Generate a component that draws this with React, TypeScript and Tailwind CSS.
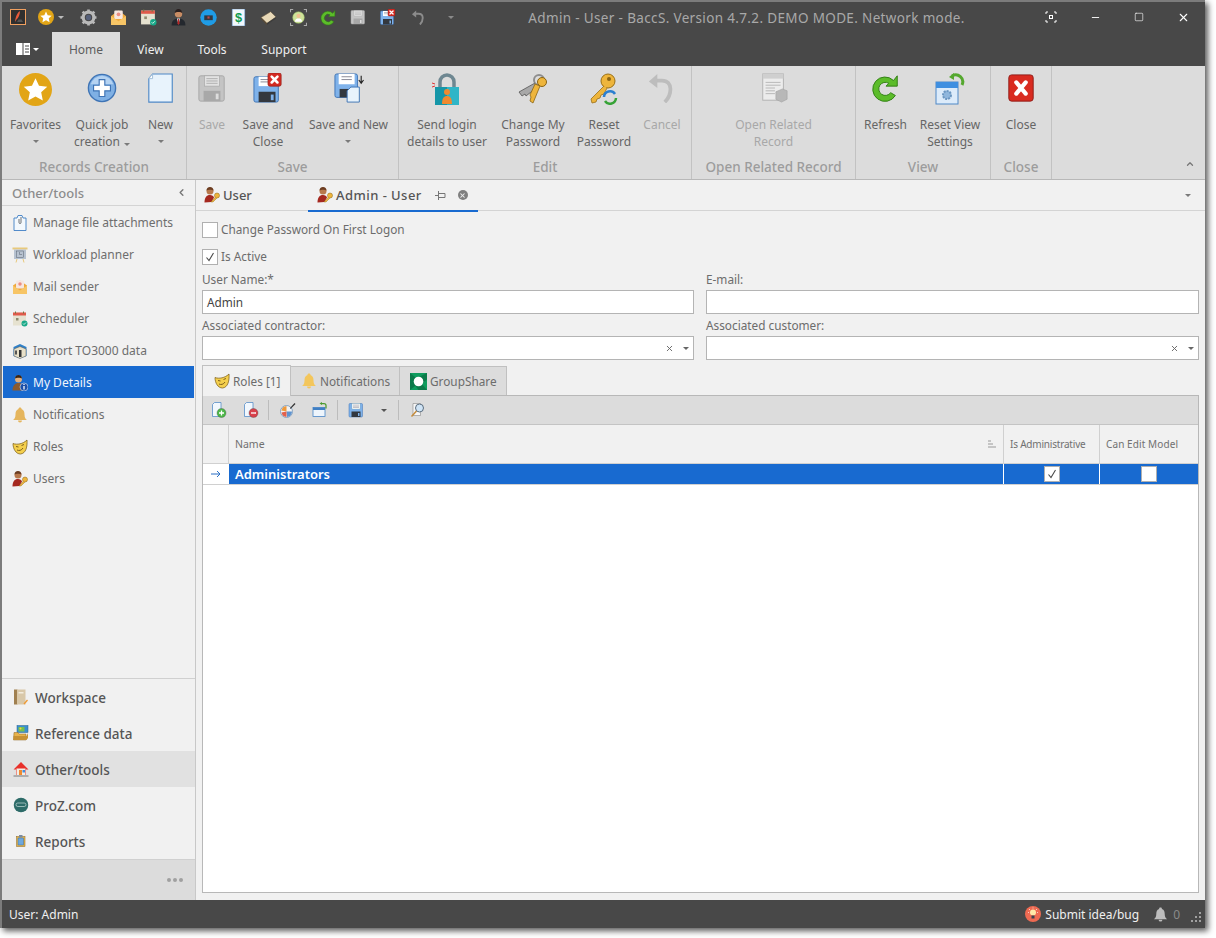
import { ReactNode } from "react";
import { ChevronLeft, ChevronUp, X, Minus, Square } from "lucide-react";

type IconProps = { s?: number };

const Svg = ({ s = 16, children }: { s?: number; children: ReactNode }) => (
  <svg width={s} height={s} viewBox="0 0 32 32" className="shrink-0">
    {children}
  </svg>
);

const StarIcon = ({ s }: IconProps) => (
  <Svg s={s}>
    <circle cx="16" cy="16" r="16" fill="#e2a516" />
    <path d="M16 5l3.4 7.4 8 .9-5.9 5.4 1.6 8L16 22.7l-7.1 4 1.6-8-5.9-5.4 8-.9z" fill="#fff" />
  </Svg>
);

const PlusIcon = ({ s }: IconProps) => (
  <Svg s={s}>
    <circle cx="16" cy="16" r="14.5" fill="#7fb0e4" stroke="#3f74b5" strokeWidth="1.5" />
    <path d="M16 3a13 13 0 0 1 12 9H4a13 13 0 0 1 12-9z" fill="#b5d3f2" />
    <path d="M13 7h6v6h6v6h-6v6h-6v-6H7v-6h6z" fill="#fff" stroke="#3f74b5" strokeWidth="1.2" />
  </Svg>
);

const PageIcon = ({ s }: IconProps) => (
  <Svg s={s}>
    <path d="M7 1h21v30H3V6z" fill="#e8f3fc" stroke="#4f88c6" strokeWidth="1.2" />
    <path d="M7 1v5H3z" fill="#fff" stroke="#9fbcd8" />
  </Svg>
);

const Floppy = ({ s, grey }: IconProps & { grey?: boolean }) => (
  <Svg s={s}>
    <rect x="2" y="3" width="27" height="27" rx="2" fill={grey ? "#c4c4c4" : "#7fb2ea"} stroke={grey ? "#a6a6a6" : "#3e73b4"} />
    <rect x="8" y="3" width="16" height="11" fill={grey ? "#e2e2e2" : "#fff"} stroke={grey ? "#a6a6a6" : "#8aa"} strokeWidth=".7" />
    <path d="M10 6h12M10 8.5h12M10 11h12" stroke={grey ? "#a0a0a0" : "#667"} strokeWidth=".8" />
    <rect x="7" y="19" width="18" height="11" fill={grey ? "#a8a8a8" : "#33383f"} />
    <rect x="20" y="22" width="3" height="6" fill={grey ? "#ddd" : "#7fb2ea"} />
  </Svg>
);

const RedBox = ({ x, y, w }: { x: number; y: number; w: number }) => (
  <g>
    <rect x={x} y={y} width={w} height={w} rx={w / 7} fill="#d42a22" stroke="#96201a" strokeWidth=".8" />
    <path
      d={`M${x + w * 0.28} ${y + w * 0.28}L${x + w * 0.72} ${y + w * 0.72}M${x + w * 0.72} ${y + w * 0.28}L${x + w * 0.28} ${y + w * 0.72}`}
      stroke="#fff"
      strokeWidth={w * 0.2}
      strokeLinecap="round"
    />
  </g>
);

const FloppyX = ({ s }: IconProps) => (
  <Svg s={s}>
    <rect x="1" y="4" width="26" height="27" rx="2" fill="#7fb2ea" stroke="#3e73b4" />
    <rect x="6" y="4" width="15" height="10" fill="#fff" />
    <path d="M8 7h11M8 9.5h11" stroke="#667" strokeWidth=".8" />
    <rect x="6" y="20" width="18" height="11" fill="#33383f" />
    <rect x="19" y="23" width="3" height="6" fill="#7fb2ea" />
    <RedBox x={16} y={0} w={14} />
  </Svg>
);

const FloppyNew = ({ s }: IconProps) => (
  <Svg s={s}>
    <rect x="1" y="1" width="24" height="25" rx="2" fill="#7fb2ea" stroke="#3e73b4" />
    <rect x="5" y="1" width="17" height="11" fill="#fff" />
    <path d="M8 4h11M8 7h11" stroke="#667" strokeWidth=".8" />
    <rect x="6" y="17" width="14" height="9" fill="#33383f" />
    <path d="M18 15h9v16H14V19z" fill="#e8f3fc" stroke="#3e73b4" />
    <path d="M29 3v7M26.5 7.5L29 11l2.5-3.5" stroke="#222" strokeWidth="1.2" fill="none" />
  </Svg>
);

const LockIcon = ({ s }: IconProps) => (
  <Svg s={s}>
    <path d="M9 15V9a7 7 0 0 1 14 0v6" fill="none" stroke="#6e8791" strokeWidth="3.5" />
    <rect x="4" y="14" width="24" height="18" fill="#2fb5c7" />
    <rect x="4" y="14" width="12" height="18" fill="#1596a8" />
    <circle cx="16" cy="19" r="3" fill="#f08a30" />
    <path d="M11 31c0-6 2-8 5-8s5 2 5 8z" fill="#f08a30" />
    <path d="M1 10l3 1M1 14l3-1" stroke="#e03434" strokeWidth="1" />
  </Svg>
);

const KeysIcon = ({ s }: IconProps) => (
  <Svg s={s}>
    <circle cx="22" cy="7" r="5" fill="none" stroke="#8e8e8e" strokeWidth="2" />
    <path d="M18 10L2 19l3 4 3-2 1 2 10-8" fill="#a8a8a8" stroke="#555" strokeWidth=".8" />
    <circle cx="25" cy="9" r="4.5" fill="#eeb53c" stroke="#8a6414" />
    <path d="M23 13l-7 17-3-2 1-4-1-2 5-11z" fill="#eeb53c" stroke="#8a6414" strokeWidth=".8" />
  </Svg>
);

const KeyRefresh = ({ s }: IconProps) => (
  <Svg s={s}>
    <circle cx="20" cy="8" r="7" fill="#eeb53c" stroke="#9a7016" />
    <circle cx="21" cy="6" r="2" fill="#8a6414" />
    <path d="M16 13L3 26l1 4 4-1 1-3 3-1 1-3 3-1 3-6" fill="#eeb53c" stroke="#9a7016" strokeWidth=".8" />
    <path d="M16 24a6 6 0 0 1 11-3" fill="none" stroke="#2c7fd0" strokeWidth="2.5" />
    <path d="M28 25a6 6 0 0 1-11 3" fill="none" stroke="#37a337" strokeWidth="2.5" />
  </Svg>
);

const UndoIcon = ({ s, c = "#bdbdbd" }: IconProps & { c?: string }) => (
  <Svg s={s}>
    <path d="M9 8h7c6 0 9 4 9 9 0 5-2 10-6 14" fill="none" stroke={c} strokeWidth="4" />
    <path d="M11 1L2 9l9 7z" fill={c} />
  </Svg>
);

const RelatedIcon = ({ s }: IconProps) => (
  <Svg s={s}>
    <rect x="4" y="1" width="22" height="28" fill="#ececec" stroke="#b0b0b0" />
    <rect x="4" y="1" width="22" height="5" fill="#cfcfcf" />
    <path d="M7 10h16M7 13h16M7 16h10M7 19h10M7 22h10" stroke="#b5b5b5" />
    <path d="M18 20l7-3 5 2v9l-6 3-6-3z" fill="#b8b8b8" stroke="#a0a0a0" strokeWidth=".6" />
  </Svg>
);

const RefreshIcon = ({ s }: IconProps) => (
  <Svg s={s}>
    <path d="M24 8a13 13 0 1 0 2 16l-5-3a7 7 0 1 1-2-10l-3 3h12V3z" fill="#5cbc2a" stroke="#2f7d12" strokeWidth="1" />
  </Svg>
);

const ResetViewIcon = ({ s }: IconProps) => (
  <Svg s={s}>
    <rect x="2" y="9" width="22" height="22" fill="#dcebfa" stroke="#4f88c6" />
    <rect x="2" y="9" width="22" height="6" fill="#3f8fe0" />
    <circle cx="13" cy="22" r="4" fill="#8fb6dc" stroke="#6b96c0" strokeWidth="2" strokeDasharray="2 1" />
    <path d="M18 3a7 7 0 0 1 10 9" fill="none" stroke="#55a82f" strokeWidth="3" />
    <path d="M20 0v7l-5-3z" fill="#55a82f" />
  </Svg>
);

const CloseIcon = ({ s }: IconProps) => (
  <Svg s={s}>
    <rect x="3" y="2" width="26" height="28" rx="3" fill="#d92b20" stroke="#8e1c16" />
    <path d="M11 10l10 12M21 10L11 22" stroke="#fff" strokeWidth="4.5" strokeLinecap="round" />
  </Svg>
);

const GearIcon = ({ s }: IconProps) => (
  <Svg s={s}>
    <circle cx="16" cy="16" r="10" fill="none" stroke="#b9b9b9" strokeWidth="6" />
    <path d="M16 1v6M16 25v6M1 16h6M25 16h6M5 5l4 4M23 23l4 4M27 5l-4 4M9 23l-4 4" stroke="#b9b9b9" strokeWidth="5" />
    <circle cx="16" cy="16" r="5" fill="#56607a" />
  </Svg>
);

const MailIcon = ({ s }: IconProps) => (
  <Svg s={s}>
    <path d="M2 13L16 3l14 10v17H2z" fill="#f0a93c" />
    <rect x="8" y="3" width="16" height="16" rx="2" fill="#f6e6df" />
    <circle cx="16" cy="10" r="3.5" fill="#ec8d82" />
    <path d="M2 13l14 10 14-10v17H2z" fill="#f7c566" />
  </Svg>
);

const CalendarIcon = ({ s }: IconProps) => (
  <Svg s={s}>
    <rect x="2" y="3" width="26" height="26" fill="#e6e2d0" />
    <rect x="2" y="3" width="26" height="6" fill="#e05a4a" />
    <path d="M7 1v4M23 1v4" stroke="#774" strokeWidth="2" />
    <rect x="8" y="14" width="5" height="5" fill="#8e8a70" />
    <circle cx="25" cy="25" r="6" fill="#18a888" />
    <path d="M22 25l2 2 4-4" stroke="#fff" strokeWidth="1.5" fill="none" />
  </Svg>
);

const PersonDark = ({ s }: IconProps) => (
  <Svg s={s}>
    <circle cx="16" cy="9" r="7" fill="#c98d64" />
    <path d="M9 8c0-6 4-8 7-8s7 2 7 8c-2-3-12-3-14 0z" fill="#2a2020" />
    <path d="M3 31c0-9 5-13 13-13s13 4 13 13z" fill="#24282e" />
    <path d="M13 18h6l-3 11z" fill="#f0f0f0" />
    <path d="M15 19h2l1 8-2 3-2-3z" fill="#b82828" />
  </Svg>
);

const BlueCircle = ({ s }: IconProps) => (
  <Svg s={s}>
    <circle cx="16" cy="16" r="15.5" fill="#1f9ce6" />
    <rect x="8" y="12" width="16" height="9" fill="#33383f" />
    <rect x="14" y="14" width="4" height="4" fill="#c24848" />
  </Svg>
);

const DollarIcon = ({ s }: IconProps) => (
  <Svg s={s}>
    <rect x="4" y="0" width="24" height="32" fill="#f2f8fd" stroke="#4f88c6" />
    <text x="16" y="25" textAnchor="middle" fontSize="24" fontWeight="700" fill="#0f9a50" fontFamily="Liberation Sans, sans-serif">$</text>
  </Svg>
);

const ParcelIcon = ({ s }: IconProps) => (
  <Svg s={s}>
    <path d="M2 16L20 5l10 10-17 12z" fill="#e8d9b8" stroke="#6a5a40" />
    <path d="M2 16l11 11v3L2 19z" fill="#5b4c35" />
    <path d="M13 27l17-12v3L13 30z" fill="#3d3d3d" />
  </Svg>
);

const FaceTarget = ({ s }: IconProps) => (
  <Svg s={s}>
    <circle cx="16" cy="16" r="11" fill="#cfe39a" stroke="#8fae5b" />
    <circle cx="16" cy="13" r="4" fill="#f0c090" />
    <path d="M9 24c1-5 4-6 7-6s6 1 7 6z" fill="#fff" />
    <path d="M1 6V1h5M26 1h5v5M31 26v5h-5M6 31H1v-5" fill="none" stroke="#aaa" strokeWidth="2" />
  </Svg>
);

const LogoIcon = ({ s }: IconProps) => (
  <Svg s={s}>
    <rect x="1" y="1" width="30" height="30" fill="#2f2f2f" stroke="#f0a060" strokeWidth="2" />
    <path d="M20 4c-5 3-9 11-10 22l3-5c4-3 7-10 7-17z" fill="#e85a3a" />
    <path d="M14 26h12l-3-5h-6z" fill="#555" />
  </Svg>
);

const UserKey = ({ s }: IconProps) => (
  <Svg s={s}>
    <circle cx="12" cy="8" r="7" fill="#b8794c" />
    <path d="M5 7c0-5 4-7 7-7s7 2 7 7c-3-2-11-2-14 0z" fill="#6b3d22" />
    <path d="M1 31c0-10 4-15 11-15 4 0 7 2 8 5l-5 9z" fill="#a5281f" />
    <circle cx="26" cy="17" r="5" fill="#eeb53c" stroke="#8a6414" />
    <path d="M23 20l-9 10h4l8-8" fill="#eeb53c" stroke="#8a6414" strokeWidth=".8" />
  </Svg>
);

const PersonInfo = ({ s }: IconProps) => (
  <Svg s={s}>
    <circle cx="13" cy="8" r="7" fill="#e0b080" />
    <path d="M6 7c0-5 4-7 7-7s7 2 7 7c-3-2-11-2-14 0z" fill="#3a2414" />
    <path d="M1 31c0-10 5-15 12-15s10 5 10 15z" fill="#8a5a30" />
    <circle cx="24" cy="24" r="8" fill="#1c4fa8" stroke="#fff" />
    <path d="M24 22v7M24 18v2" stroke="#fff" strokeWidth="2.5" />
  </Svg>
);

const BellIcon = ({ s, c = "#e5b55c" }: IconProps & { c?: string }) => (
  <Svg s={s}>
    <path d="M16 1c2 0 3 1 3 3 5 2 6 6 6 11 0 6 2 9 5 11H2c3-2 5-5 5-11 0-5 1-9 6-11 0-2 1-3 3-3z" fill={c} />
    <path d="M12 27h8a4 4 0 0 1-8 0z" fill={c} />
  </Svg>
);

const MaskIcon = ({ s }: IconProps) => (
  <Svg s={s}>
    <path d="M2 9c8 3 20 1 28-7 1 13-2 27-13 28C8 30 2 20 2 9z" fill="#f4cf4c" stroke="#7e5f1a" strokeWidth="1.5" />
    <path d="M8 15l5 1M19 13l5-2M10 22c4 2 9 1 12-4" fill="none" stroke="#7e5f1a" strokeWidth="2" />
  </Svg>
);

const AttachIcon = ({ s }: IconProps) => (
  <Svg s={s}>
    <path d="M4 6h6l2-5h8l2 5h6v25H4z" fill="#f2f8fd" stroke="#3f7fc4" strokeWidth="1.8" />
    <path d="M18 4v11a2 2 0 0 1-4 0V8" fill="none" stroke="#444" strokeWidth="1.5" />
  </Svg>
);

const PlannerIcon = ({ s }: IconProps) => (
  <Svg s={s}>
    <rect x="1" y="1" width="30" height="4" fill="#e8c97c" />
    <rect x="4" y="5" width="24" height="19" fill="#b7c2d0" />
    <rect x="9" y="8" width="14" height="13" fill="none" stroke="#56606e" />
    <path d="M15 10v5h5" stroke="#56606e" fill="none" />
    <path d="M10 24l-2 7M22 24l2 7" stroke="#e8c97c" strokeWidth="2" />
  </Svg>
);

const ImportIcon = ({ s }: IconProps) => (
  <Svg s={s}>
    <path d="M16 2l13 6v18l-13 5L3 26V8z" fill="#2f80c8" />
    <path d="M4 12l12-5 12 5v14l-12 5-12-5z" fill="#e8e0c8" stroke="#555" />
    <rect x="14" y="14" width="5" height="14" fill="#333" />
    <rect x="6" y="15" width="4" height="8" fill="#555" />
  </Svg>
);

const BookIcon = ({ s }: IconProps) => (
  <Svg s={s}>
    <rect x="2" y="1" width="7" height="30" fill="#a08050" />
    <rect x="8" y="1" width="17" height="30" fill="#d9c8a9" />
    <rect x="11" y="6" width="10" height="3" fill="#f3ecdd" />
    <path d="M21 29l7-8 2 2-7 8z" fill="#ef9a34" />
  </Svg>
);

const RefDataIcon = ({ s }: IconProps) => (
  <Svg s={s}>
    <rect x="8" y="1" width="22" height="14" fill="#3a8fd0" stroke="#28608e" />
    <rect x="11" y="4" width="12" height="9" fill="#78c04c" />
    <circle cx="15" cy="7" r="2" fill="#f2d34c" />
    <path d="M2 15h8l2 3h14v12H1z" fill="#e8b24a" stroke="#8c6520" />
    <path d="M1 22h26l3-6v10l-3 4H1z" fill="#c69134" />
  </Svg>
);

const HomeIcon = ({ s }: IconProps) => (
  <Svg s={s}>
    <path d="M16 2L1 17h5v11h20V17h5z" fill="#e8302a" />
    <rect x="7" y="15" width="18" height="13" fill="#f2ede4" />
    <rect x="12" y="18" width="6" height="10" fill="#f08a30" />
    <rect x="19" y="18" width="5" height="5" fill="#3f8fe0" />
    <path d="M1 30h30" stroke="#555" strokeWidth="1.5" />
  </Svg>
);

const ProzIcon = ({ s }: IconProps) => (
  <Svg s={s}>
    <circle cx="16" cy="16" r="14.5" fill="#2d6b68" />
    <rect x="6" y="12" width="20" height="7" rx="3.5" fill="none" stroke="#cfe2e0" strokeWidth="1.3" />
  </Svg>
);

const ReportIcon = ({ s }: IconProps) => (
  <Svg s={s}>
    <rect x="7" y="7" width="17" height="20" fill="#e6b54a" stroke="#8c6520" />
    <rect x="10" y="10" width="11" height="14" fill="#6ea8de" stroke="#3d6fa0" />
    <rect x="12" y="4" width="7" height="5" fill="#7b8ba0" />
  </Svg>
);

const GroupShareIcon = ({ s }: IconProps) => (
  <Svg s={s}>
    <rect width="32" height="32" fill="#0e9c5e" />
    <path d="M0 0l12 10L32 0v12L22 20l10 12H16l-6-8-10 8z" fill="#0b7a4a" />
    <circle cx="16" cy="16" r="9" fill="#fff" />
  </Svg>
);

const PageMark = ({ s, c, plus }: IconProps & { c: string; plus?: boolean }) => (
  <Svg s={s}>
    <path d="M7 1h13v28H3V5z" fill="#f1f7fd" stroke="#4f88c6" strokeWidth="1.5" />
    <circle cx="21" cy="22" r="9" fill={c} stroke="#444" strokeWidth=".7" />
    <path d={plus ? "M16 22h10M21 17v10" : "M16 22h10"} stroke="#fff" strokeWidth="2.6" />
  </Svg>
);

const PaletteIcon = ({ s }: IconProps) => (
  <Svg s={s}>
    <circle cx="13" cy="19" r="12" fill="#f2f2f2" stroke="#6b8fb5" strokeWidth="1.5" />
    <path d="M13 19V8a11 11 0 0 0-10 9z" fill="#ef9a3c" />
    <path d="M13 19h11a11 11 0 0 1-10 11z" fill="#5e93cf" />
    <path d="M13 19v11a11 11 0 0 1-10-9z" fill="#e2604c" />
    <path d="M20 12l9-10 2 2-10 10z" fill="#333" />
  </Svg>
);

const WindowArrow = ({ s }: IconProps) => (
  <Svg s={s}>
    <rect x="2" y="11" width="24" height="18" fill="#eef5fc" stroke="#3f7fc4" strokeWidth="1.5" />
    <rect x="2" y="11" width="24" height="5" fill="#3f7fc4" />
    <path d="M18 3h6a4 4 0 0 1 4 4v6" fill="none" stroke="#4b9a30" strokeWidth="2.5" />
    <path d="M20 0v6l-5-3z" fill="#4b9a30" />
  </Svg>
);

const FindIcon = ({ s }: IconProps) => (
  <Svg s={s}>
    <path d="M6 3h15v24H6z" fill="#f6f6f6" stroke="#777" />
    <circle cx="19" cy="12" r="8" fill="#cfe4f6" stroke="#5c6f80" strokeWidth="2" />
    <path d="M13 18L3 29" stroke="#c58b3a" strokeWidth="3" />
  </Svg>
);

const IdeaIcon = ({ s }: IconProps) => (
  <Svg s={s}>
    <circle cx="16" cy="16" r="16" fill="#ee6a52" />
    <circle cx="16" cy="13" r="6" fill="#ffe9a8" />
    <rect x="13" y="19" width="6" height="6" fill="#3a4450" />
    <path d="M6 13h2M24 13h2M8 6l2 2M24 6l-2 2M16 3v2" stroke="#fff" strokeWidth="1.3" />
  </Svg>
);

const Caret = ({ c = "#7a7a7a" }: { c?: string }) => (
  <svg width="6" height="3" viewBox="0 0 6 3" className="inline-block shrink-0 align-middle">
    <path d="M0 0h6L3 3z" fill={c} />
  </svg>
);

const RibbonBtn = ({
  w,
  icon,
  lines,
  dim,
  drop,
}: {
  w: string;
  icon: ReactNode;
  lines: string[];
  dim?: boolean;
  drop?: "inline" | "below";
}) => (
  <div className={`${w} flex shrink-0 flex-col items-center pt-[7px] ${dim ? "text-[#a8a8a8]" : "text-[#666]"}`}>
    <div className="flex h-[36px] items-start justify-center">{icon}</div>
    <div className="mt-[7px] flex flex-col items-center leading-[17px]">
      {lines.map((l, i) => (
        <span key={l} className="whitespace-nowrap">
          {l}
          {drop === "inline" && i === lines.length - 1 ? (
            <span className="ml-1 inline-flex">
              <Caret />
            </span>
          ) : null}
        </span>
      ))}
      {drop === "below" ? (
        <span className="flex h-[17px] items-center">
          <Caret />
        </span>
      ) : null}
    </div>
  </div>
);

const RibbonGroup = ({ w, label, children, last }: { w: string; label: string; children: ReactNode; last?: boolean }) => (
  <div className={`${w} flex shrink-0 flex-col ${last ? "" : "border-r border-[#c2c2c2]"}`}>
    <div className="flex h-[91px] items-start">{children}</div>
    <div className="flex h-[22px] items-center justify-center pb-[2px] text-[13.5px] font-medium text-[#9c9c9c]">{label}</div>
  </div>
);

const sideItems: { label: string; icon: ReactNode; active?: boolean }[] = [
  { label: "Manage file attachments", icon: <AttachIcon s={16} /> },
  { label: "Workload planner", icon: <PlannerIcon s={16} /> },
  { label: "Mail sender", icon: <MailIcon s={16} /> },
  { label: "Scheduler", icon: <CalendarIcon s={16} /> },
  { label: "Import TO3000 data", icon: <ImportIcon s={16} /> },
  { label: "My Details", icon: <PersonInfo s={16} />, active: true },
  { label: "Notifications", icon: <BellIcon s={16} /> },
  { label: "Roles", icon: <MaskIcon s={16} /> },
  { label: "Users", icon: <UserKey s={16} /> },
];

const navItems: { label: string; icon: ReactNode; active?: boolean }[] = [
  { label: "Workspace", icon: <BookIcon s={16} /> },
  { label: "Reference data", icon: <RefDataIcon s={16} /> },
  { label: "Other/tools", icon: <HomeIcon s={16} />, active: true },
  { label: "ProZ.com", icon: <ProzIcon s={16} /> },
  { label: "Reports", icon: <ReportIcon s={16} /> },
];

const Field = ({ label, value, combo }: { label: string; value?: string; combo?: boolean }) => (
  <div className="flex min-w-0 flex-col">
    <div className="flex h-[22px] items-center pt-[2px] text-[#6c6c6c]">{label}</div>
    <div className="flex h-[24px] items-center border border-[#b4b4b4] bg-white px-[4px] text-[#444]">
      <span className="flex-1 pt-[2px]">{value}</span>
      {combo ? (
        <span className="flex items-center gap-[9px]">
          <X size={9} strokeWidth={2.5} className="text-[#666]" />
          <Caret c="#666" />
        </span>
      ) : null}
    </div>
  </div>
);

const CheckBox = ({ checked }: { checked?: boolean }) => (
  <span className="flex h-[16px] w-[16px] shrink-0 items-center justify-center border border-[#b0b0b0] bg-white">
    {checked ? (
      <svg width="12" height="12" viewBox="0 0 12 12">
        <path d="M2.5 6.5L5 9.5 9.5 2" fill="none" stroke="#4a4a4a" strokeWidth="1.1" />
      </svg>
    ) : null}
  </span>
);

const Sep = ({ className }: { className: string }) => <span className={`h-[20px] w-px bg-[#bcbcbc] ${className}`} />;

const App = () => {
  return (
    <div className="h-[938px] w-[1216px] overflow-hidden bg-white font-['Noto_Sans',sans-serif] text-[12px]">
      <div className="flex h-[928px] w-[1205px] flex-col border-l-2 border-t-2 border-[#7c7c7c] bg-[#f1f1f1] shadow-[3px_3px_6px_rgba(0,0,0,0.65)]">
        {/* title bar */}
        <div className="flex h-[30px] shrink-0 items-center bg-[#484848]">
          <div className="flex w-[468px] items-center pl-[8px]">
            <LogoIcon s={16} />
            <div className="ml-[12px] flex w-[35px] items-center gap-[4px]">
              <StarIcon s={16} />
              <Caret c="#bbb" />
            </div>
            <div className="flex items-center">
              {[
                <GearIcon s={17} key="a" />,
                <MailIcon s={17} key="b" />,
                <CalendarIcon s={17} key="c" />,
                <PersonDark s={17} key="d" />,
                <BlueCircle s={17} key="e" />,
                <DollarIcon s={17} key="f" />,
                <ParcelIcon s={17} key="g" />,
                <FaceTarget s={17} key="h" />,
                <RefreshIcon s={17} key="i" />,
                <Floppy s={16} grey key="j" />,
                <FloppyX s={16} key="k" />,
                <UndoIcon s={15} c="#8c8c8c" key="l" />,
              ].map((ic) => (
                <span key={ic.key} className="flex w-[30px] justify-center">
                  {ic}
                </span>
              ))}
            </div>
            <span className="ml-[15px] flex">
              <Caret c="#8a8a8a" />
            </span>
          </div>
          <div className="flex-1 pr-[6px] pt-[2px] text-center text-[13.5px] tracking-[0.35px] text-[#a9a9a9]">
            Admin - User - BaccS. Version 4.7.2. DEMO MODE. Network mode.
          </div>
          <div className="flex items-center text-white">
            <span className="flex w-[44px] justify-center">
              <svg width="12" height="12" viewBox="0 0 12 12" fill="none" stroke="#fff">
                <path d="M1 3V1h2M9 1h2v2M11 9v2H9M3 11H1V9" />
                <rect x="4.5" y="4.5" width="3" height="3" />
              </svg>
            </span>
            <span className="flex w-[44px] justify-center">
              <Minus size={11} />
            </span>
            <span className="flex w-[44px] justify-center">
              <Square size={10} strokeWidth={1.5} />
            </span>
            <span className="flex w-[44px] justify-center">
              <X size={13} />
            </span>
          </div>
        </div>

        {/* ribbon tabs */}
        <div className="flex h-[34px] shrink-0 items-end bg-[#484848] text-[#f0f0f0]">
          <div className="flex h-[34px] w-[50px] items-center gap-[3px] pl-[14px]">
            <svg width="14" height="12" viewBox="0 0 14 12">
              <rect width="14" height="12" fill="#fff" />
              <path d="M7 0v12" stroke="#484848" />
              <path d="M9 3h4M9 6h4M9 9h4" stroke="#484848" />
            </svg>
            <Caret c="#fff" />
          </div>
          <div className="flex h-[34px] w-[68px] items-center justify-center bg-[#dcdcdc] pt-[2px] text-[#5c5c5c]">Home</div>
          <div className="flex h-[34px] w-[61px] items-center justify-center pt-[2px]">View</div>
          <div className="flex h-[34px] w-[62px] items-center justify-center pt-[2px]">Tools</div>
          <div className="flex h-[34px] w-[82px] items-center justify-center pt-[2px]">Support</div>
        </div>

        {/* ribbon */}
        <div className="relative flex h-[114px] shrink-0 border-b border-[#b8b8b8] bg-[#dcdcdc]">
          <RibbonGroup w="w-[185px]" label="Records Creation">
            <RibbonBtn w="w-[67px]" icon={<StarIcon s={33} />} lines={["Favorites"]} drop="below" />
            <RibbonBtn w="w-[66px]" icon={<PlusIcon s={30} />} lines={["Quick job", "creation"]} drop="inline" />
            <RibbonBtn w="w-[51px]" icon={<PageIcon s={30} />} lines={["New"]} drop="below" />
          </RibbonGroup>
          <RibbonGroup w="w-[212px]" label="Save">
            <RibbonBtn w="w-[50px]" icon={<Floppy s={30} grey />} lines={["Save"]} dim />
            <RibbonBtn w="w-[62px]" icon={<FloppyX s={30} />} lines={["Save and", "Close"]} />
            <RibbonBtn w="w-[99px]" icon={<FloppyNew s={30} />} lines={["Save and New"]} drop="below" />
          </RibbonGroup>
          <RibbonGroup w="w-[293px]" label="Edit">
            <RibbonBtn w="w-[96px]" icon={<LockIcon s={32} />} lines={["Send login", "details to user"]} />
            <RibbonBtn w="w-[76px]" icon={<KeysIcon s={32} />} lines={["Change My", "Password"]} />
            <RibbonBtn w="w-[66px]" icon={<KeyRefresh s={32} />} lines={["Reset", "Password"]} />
            <RibbonBtn w="w-[50px]" icon={<UndoIcon s={30} />} lines={["Cancel"]} dim />
          </RibbonGroup>
          <RibbonGroup w="w-[164px]" label="Open Related Record">
            <RibbonBtn w="w-[163px]" icon={<RelatedIcon s={30} />} lines={["Open Related", "Record"]} dim />
          </RibbonGroup>
          <RibbonGroup w="w-[135px]" label="View">
            <RibbonBtn w="w-[59px]" icon={<RefreshIcon s={30} />} lines={["Refresh"]} />
            <RibbonBtn w="w-[70px]" icon={<ResetViewIcon s={32} />} lines={["Reset View", "Settings"]} />
          </RibbonGroup>
          <RibbonGroup w="w-[61px]" label="Close">
            <RibbonBtn w="w-[60px]" icon={<CloseIcon s={30} />} lines={["Close"]} />
          </RibbonGroup>
          <ChevronUp size={10} strokeWidth={3} className="absolute bottom-[10px] right-[10px] text-[#777]" />
        </div>

        {/* main */}
        <div className="flex min-h-0 flex-1">
          {/* sidebar */}
          <aside className="flex w-[194px] shrink-0 flex-col border-r border-[#c8c8c8]">
            <div className="flex h-[26px] shrink-0 items-center justify-between border-b border-[#d4d4d4] pl-[10px] pr-[8px] text-[13px] font-medium text-[#8c8c8c]">
              <span className="pt-[2px]">Other/tools</span>
              <ChevronLeft size={11} strokeWidth={3} className="text-[#777]" />
            </div>
            <div className="flex-1">
              {sideItems.map((it) => (
                <div
                  key={it.label}
                  className={`mx-[1px] flex h-[32px] items-center gap-[5px] pl-[9px] pt-[1px] ${it.active ? "bg-[#186ad0] text-[#f2f6fc]" : "text-[#6e6e6e]"}`}
                >
                  {it.icon}
                  <span>{it.label}</span>
                </div>
              ))}
            </div>
            <div className="border-y border-[#d0d0d0]">
              {navItems.map((it) => (
                <div
                  key={it.label}
                  className={`flex h-[36px] items-center gap-[6px] pl-[11px] text-[13.5px] font-medium text-[#555] ${it.active ? "bg-[#e1e1e1]" : ""}`}
                >
                  {it.icon}
                  <span className="pt-[2px]">{it.label}</span>
                </div>
              ))}
            </div>
            <div className="flex h-[40px] shrink-0 items-center justify-end gap-[2px] bg-[#dcdcdc] pr-[12px]">
              <span className="h-[4px] w-[4px] rounded-full bg-[#a0a0a0]" />
              <span className="h-[4px] w-[4px] rounded-full bg-[#a0a0a0]" />
              <span className="h-[4px] w-[4px] rounded-full bg-[#a0a0a0]" />
            </div>
          </aside>

          {/* content */}
          <div className="flex min-w-0 flex-1 flex-col">
            <div className="flex h-[31px] shrink-0 items-center border-b border-[#d4d4d4] pl-[8px]">
              <div className="flex w-[104px] items-center gap-[3px] text-[13px] font-medium text-[#555]">
                <UserKey s={16} />
                <span className="pt-[2px]">User</span>
              </div>
              <div className="relative flex h-[31px] w-[170px] items-center gap-[3px] pl-[9px] text-[13px] font-medium text-[#555]">
                <UserKey s={16} />
                <span className="pt-[2px] tracking-[0.45px]">Admin - User</span>
                <svg width="11" height="9" viewBox="0 0 11 9" fill="none" stroke="#777" className="ml-[10px]">
                  <path d="M0 4.5h3M3.5 0v9M3.5 2.5H10v4H3.5" />
                </svg>
                <span className="ml-[9px] flex h-[10px] w-[10px] items-center justify-center rounded-full bg-[#808080]">
                  <X size={7} strokeWidth={3.5} className="text-[#f1f1f1]" />
                </span>
                <span className="absolute inset-x-0 bottom-[-1px] h-[2px] bg-[#186ad0]" />
              </div>
              <span className="ml-auto flex pr-[14px]">
                <Caret />
              </span>
            </div>

            <div className="flex min-h-0 flex-1 flex-col px-[6px] pb-[7px] text-[11.8px]">
              <div className="mt-[5px] flex h-[27px] items-center gap-[3px] text-[#6c6c6c]">
                <CheckBox />
                <span>Change Password On First Logon</span>
              </div>
              <div className="flex h-[25px] items-center gap-[3px] pt-[2px] text-[#6c6c6c]">
                <CheckBox checked />
                <span>Is Active</span>
              </div>
              <div className="grid grid-cols-[492px_493px] gap-x-[12px]">
                <Field label="User Name:*" value="Admin" />
                <Field label="E-mail:" />
                <Field label="Associated contractor:" combo />
                <Field label="Associated customer:" combo />
              </div>

              {/* detail tabs */}
              <div className="mt-[5px] flex h-[30px] shrink-0 items-end text-[11.8px]">
                <div className="z-10 -mb-px flex h-[31px] w-[89px] items-center gap-[3px] border border-b-0 border-[#c0c0c0] bg-[#f1f1f1] pl-[11px] text-[#6c6c6c]">
                  <MaskIcon s={16} />
                  <span className="pt-[2px]">Roles [1]</span>
                </div>
                <div className="flex h-[29px] w-[109px] items-center gap-[3px] border-r border-t border-[#c0c0c0] bg-[#dcdcdc] pl-[10px] text-[#6c6c6c]">
                  <BellIcon s={16} c="#f3c65c" />
                  <span className="pt-[1px]">Notifications</span>
                </div>
                <div className="flex h-[29px] w-[107px] items-center gap-[3px] border-r border-t border-[#c0c0c0] bg-[#dcdcdc] pl-[10px] text-[#6c6c6c]">
                  <GroupShareIcon s={17} />
                  <span className="pt-[1px]">GroupShare</span>
                </div>
              </div>

              {/* grid */}
              <div className="flex min-h-0 flex-1 flex-col border border-[#b8b8b8] bg-white">
                <div className="flex h-[29px] shrink-0 items-center border-b border-[#c4c4c4] bg-[#dcdcdc] pl-[8px]">
                  <PageMark s={16} c="#4cb848" plus />
                  <span className="ml-[16px] flex">
                    <PageMark s={16} c="#d8404a" />
                  </span>
                  <Sep className="ml-[9px] mr-[11px]" />
                  <PaletteIcon s={16} />
                  <span className="ml-[16px] flex">
                    <WindowArrow s={16} />
                  </span>
                  <Sep className="ml-[9px] mr-[10px]" />
                  <Floppy s={16} />
                  <span className="ml-[17px] flex">
                    <Caret c="#555" />
                  </span>
                  <Sep className="ml-[11px] mr-[11px]" />
                  <FindIcon s={16} />
                </div>
                <div className="flex h-[39px] shrink-0 border-b border-[#d0d0d0] bg-[#f1f1f1] text-[10px] text-[#707070]">
                  <div className="w-[26px] border-r border-[#d0d0d0]" />
                  <div className="flex flex-1 items-center justify-between border-r border-[#d0d0d0] px-[6px]">
                    <span className="pt-[2px] text-[10.5px]">Name</span>
                    <svg width="9" height="8" viewBox="0 0 9 8" stroke="#999">
                      <path d="M0 1h3M0 4h5M0 7h8" />
                    </svg>
                  </div>
                  <div className="flex w-[96px] items-center border-r border-[#d0d0d0] pl-[6px] tracking-[-0.2px]">Is Administrative</div>
                  <div className="flex w-[98px] items-center pl-[6px] tracking-[0.1px]">Can Edit Model</div>
                </div>
                <div className="flex h-[21px] shrink-0 border-b border-[#d0d0d0]">
                  <div className="flex w-[26px] items-center justify-center bg-white">
                    <svg width="10" height="8" viewBox="0 0 10 8" fill="none" stroke="#2a6fc4">
                      <path d="M0 4h9M6 1l3 3-3 3" />
                    </svg>
                  </div>
                  <div className="flex flex-1 items-center border-r border-white bg-[#186ad0] px-[6px] pt-[2px] text-[13px] font-semibold text-white">Administrators</div>
                  <div className="flex w-[96px] items-center justify-center border-r border-white bg-[#186ad0]">
                    <CheckBox checked />
                  </div>
                  <div className="flex w-[98px] items-center justify-center bg-[#186ad0]">
                    <CheckBox />
                  </div>
                </div>
              </div>
            </div>
          </div>
        </div>

        {/* status bar */}
        <div className="flex h-[28px] shrink-0 items-center bg-[#484848] pl-[7px] text-[#f0f0f0]">
          <span className="pt-[2px]">User: Admin</span>
          <div className="ml-auto flex items-center">
            <IdeaIcon s={16} />
            <span className="ml-[4px] pt-[2px]">Submit idea/bug</span>
            <span className="ml-[14px] flex">
              <BellIcon s={15} c="#bdbdbd" />
            </span>
            <span className="ml-[5px] pt-[2px] text-[#8a8a8a]">0</span>
            <svg width="12" height="12" viewBox="0 0 12 12" fill="#a0a0a0" className="ml-[10px] mr-[3px] mt-[6px]">
              <rect x="9" y="1" width="2" height="2" />
              <rect x="5" y="5" width="2" height="2" />
              <rect x="9" y="5" width="2" height="2" />
              <rect x="1" y="9" width="2" height="2" />
              <rect x="5" y="9" width="2" height="2" />
              <rect x="9" y="9" width="2" height="2" />
            </svg>
          </div>
        </div>
      </div>
    </div>
  );
};

export default App;
